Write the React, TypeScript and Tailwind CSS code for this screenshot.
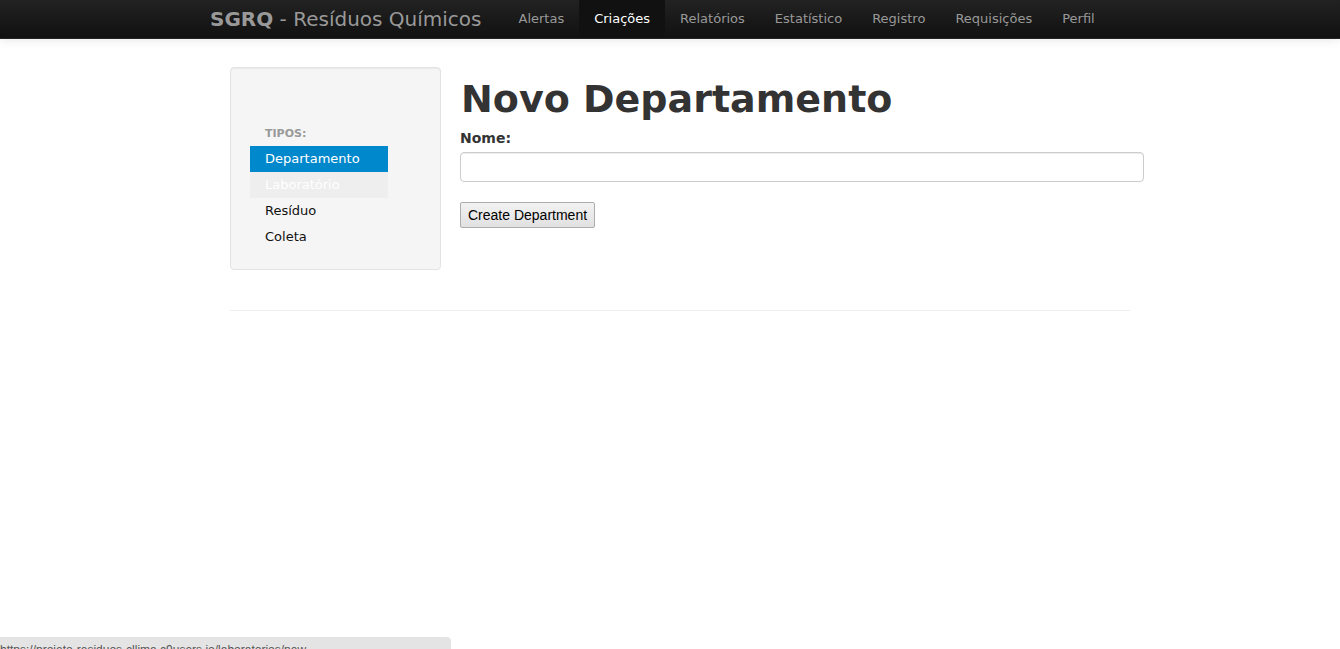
import React from "react";

const navItems = ["Alertas", "Criações", "Relatórios", "Estatístico", "Registro", "Requisições", "Perfil"];

export default function App() {
  return (
    <div className="relative min-h-[649px] bg-white" style={{ fontFamily: '"DejaVu Sans", Verdana, sans-serif' }}>
      {/* Navbar */}
      <div className="h-[39px] bg-gradient-to-b from-[#222222] to-[#111111] border-b border-[#252525] shadow-[0_1px_10px_rgba(0,0,0,0.1)]">
        <div className="w-[940px] mx-auto flex items-stretch h-full">
          <div className="pl-[10px] pr-[22px] flex items-center text-[20px] text-[#999999] leading-none">
            <span className="font-bold">SGRQ</span>
            <span>&nbsp;- Resíduos Químicos</span>
          </div>
          <div className="flex items-stretch">
            {navItems.map((n) => (
              <div
                key={n}
                className={
                  "px-[15px] flex items-center text-[13px] " +
                  (n === "Criações" ? "bg-[#111111] text-white" : "text-[#999999]")
                }
              >
                {n}
              </div>
            ))}
          </div>
        </div>
      </div>

      {/* Content */}
      <div className="w-[940px] mx-auto pl-[30px] pr-[10px] pt-[28px]">
        <div className="flex">
          <div className="shrink-0 w-[211px] h-[203px] bg-[#f5f5f5] border border-[#e3e3e3] rounded-[4px] shadow-[inset_0_1px_1px_rgba(0,0,0,0.05)] pt-[58px] pl-[19px]">
            <div className="pl-[15px] text-[11px] font-bold text-[#999999] uppercase leading-[16px] h-[20px]">Tipos:</div>
            <div className="w-[138px] text-[13px] leading-[26px]">
              <div className="bg-[#0088cc] text-white pl-[15px] h-[26px]">Departamento</div>
              <div className="bg-[#eeeeee] text-white pl-[15px] h-[26px]">Laboratório</div>
              <div className="text-[#111111] pl-[15px] h-[26px]">Resíduo</div>
              <div className="text-[#111111] pl-[15px] h-[26px]">Coleta</div>
            </div>
          </div>
          <div className="ml-[19px] flex-1">
            <h1 className="text-[38px] font-bold text-[#333333] leading-[58px] mt-[3px] pl-[1px]">Novo Departamento</h1>
            <div className="text-[14px] font-bold text-[#333333] leading-[20px]">Nome:</div>
            <div className="mt-[4px] w-[684px] h-[30px] border border-[#cccccc] rounded-[4px] bg-white shadow-[inset_0_1px_1px_rgba(0,0,0,0.075)]" />
            <button
              className="mt-[20px] h-[26px] px-[7px] border border-[#adadad] rounded-[2px] bg-gradient-to-b from-[#f2f2f2] to-[#e1e1e1] text-[14px] text-black"
              style={{ fontFamily: '"Liberation Sans", Arial, sans-serif' }}
            >
              Create Department
            </button>
          </div>
        </div>
        <div className="mt-[40px] border-t border-[#eeeeee]" />
      </div>

      {/* Status bar */}
      <div className="absolute left-0 top-[637px] w-[451px] h-[12px] bg-[#e4e4e4] rounded-tr-[4px] overflow-hidden">
        <div className="pt-[6px] text-[12px] leading-[14px] text-[#555555]" style={{ fontFamily: '"Liberation Sans", Arial, sans-serif' }}>
          https://projeto-residuos-cllima.c9users.io/laboratorios/new
        </div>
      </div>
    </div>
  );
}
